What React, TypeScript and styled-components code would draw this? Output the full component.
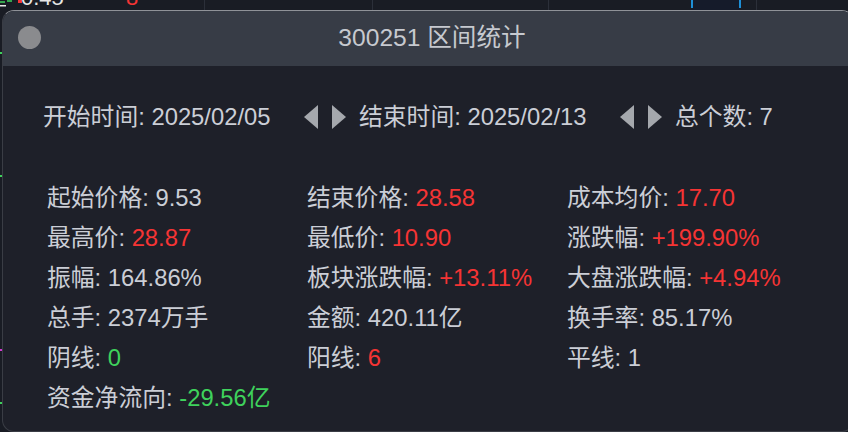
import React, { FC } from 'react';
import styled, { createGlobalStyle } from 'styled-components';

const GlobalStyle = createGlobalStyle`
  html, body {
    margin: 0;
    padding: 0;
    background: #191c24;
  }
  body {
    font-family: "Liberation Sans", "Noto Sans CJK SC", sans-serif;
  }
`;

const Desktop = styled.div`
  position: relative;
  width: 848px;
  height: 432px;
  overflow: hidden;
  background: #191c24;
`;

const Backdrop = styled.svg`
  display: block;
`;

const Window = styled.div`
  position: absolute;
  left: 2px;
  top: 10px;
  width: 852px;
  height: 422px;
  box-sizing: border-box;
  display: flex;
  flex-direction: column;
  border-radius: 12px;
  border: 1px solid #3a3d45;
  border-top-color: #8f9298;
  overflow: hidden;
  background: #1e2029;
  color: #cbced6;
  font-size: 23.8px;
`;

const TitleBar = styled.div`
  position: relative;
  height: 55px;
  flex-shrink: 0;
  display: flex;
  align-items: center;
  justify-content: center;
  background: #373c46;
  padding-left: 8px;
`;

const CloseDot = styled.span`
  position: absolute;
  left: 15px;
  top: 15px;
  width: 23px;
  height: 23px;
  border-radius: 50%;
  background: #8a8b8e;
`;

const Title = styled.h1`
  margin: 0;
  font-size: 24.6px;
  font-weight: normal;
  line-height: 1;
  color: #c6c9cf;
`;

const Body = styled.div`
  padding: 36px 0 0 40px;
`;

const RangeRow = styled.div`
  display: flex;
  align-items: center;
  height: 30px;
  line-height: 30px;
`;

const Field = styled.span<{ $width?: number }>`
  width: ${ p => (p.$width ? `${ p.$width }px` : 'auto') };
  white-space: nowrap;
`;

const Arrows = styled.span`
  display: flex;
  gap: 14px;
  width: 42px;
  margin-right: 13px;
`;

const Triangle = styled.span<{ $dir: 'left' | 'right' }>`
  width: 0;
  height: 0;
  border-top: 12px solid transparent;
  border-bottom: 12px solid transparent;
  ${ p => (p.$dir === 'left'
    ? 'border-right: 14px solid #a5a8ad;'
    : 'border-left: 14px solid #a5a8ad;') }
`;

const StatsGrid = styled.div`
  display: grid;
  grid-template-columns: repeat(3, 260px);
  grid-auto-rows: 40px;
  margin: 46px 0 0 4px;
`;

const Stat = styled.div`
  line-height: 40px;
  white-space: nowrap;
`;

type Tone = 'plain' | 'up' | 'down';

const Value = styled.span<{ $tone: Tone }>`
  color: ${ p => (p.$tone === 'up' ? '#f53434' : p.$tone === 'down' ? '#3fd25c' : '#cbced6') };
`;

interface StatItem {
  label: string;
  value: string;
  tone: Tone;
}

const stats: StatItem[] = [
  { label: '起始价格', value: '9.53', tone: 'plain' },
  { label: '结束价格', value: '28.58', tone: 'up' },
  { label: '成本均价', value: '17.70', tone: 'up' },
  { label: '最高价', value: '28.87', tone: 'up' },
  { label: '最低价', value: '10.90', tone: 'up' },
  { label: '涨跌幅', value: '+199.90%', tone: 'up' },
  { label: '振幅', value: '164.86%', tone: 'plain' },
  { label: '板块涨跌幅', value: '+13.11%', tone: 'up' },
  { label: '大盘涨跌幅', value: '+4.94%', tone: 'up' },
  { label: '总手', value: '2374万手', tone: 'plain' },
  { label: '金额', value: '420.11亿', tone: 'plain' },
  { label: '换手率', value: '85.17%', tone: 'plain' },
  { label: '阴线', value: '0', tone: 'down' },
  { label: '阳线', value: '6', tone: 'up' },
  { label: '平线', value: '1', tone: 'plain' },
  { label: '资金净流向', value: '-29.56亿', tone: 'down' },
];

// the chart peeking out behind the dialog
const ChartBehind: FC = () => (
  <Backdrop width={ 848 } height={ 432 } viewBox="0 0 848 432">
    <rect width="848" height="432" fill="#191c24" />
    <rect x="692" y="0" width="48" height="10" fill="#151b2a" />
    { [204, 372, 548, 756].map(x => (
      <rect key={ x } x={ x } y="0" width="1" height="10" fill="#2b2f39" />
    )) }
    <rect x="691" y="0" width="2" height="8" fill="#1e8fd6" />
    <rect x="739" y="0" width="2" height="8" fill="#1e8fd6" />
    <path d="M0 2 L5 2 M7 1 L12 1" stroke="#3fd25c" strokeWidth="1.5" />
    <rect x="0" y="5" width="6" height="1.5" fill="#e8e8e8" />
    <rect x="18" y="0" width="4" height="3" fill="#f53434" />
    <text x="21" y="5" fontSize="22" fill="#e6e6e6" fontFamily="Liberation Sans">0.45</text>
    <text x="126" y="5" fontSize="22" fill="#f53434" fontFamily="Liberation Sans">8</text>
    <rect x="0" y="52" width="3" height="2" fill="#3fd25c" />
    <rect x="0" y="175" width="3" height="2" fill="#3fd25c" />
    <rect x="0" y="349" width="3" height="2" fill="#d23ad2" />
    <rect x="0" y="402" width="3" height="2" fill="#3fd25c" />
  </Backdrop>
);

const App: FC = () => (
  <>
    <GlobalStyle />
    <Desktop>
      <ChartBehind />
      <Window>
        <TitleBar>
          <CloseDot />
          <Title>300251 区间统计</Title>
        </TitleBar>
        <Body>
          <RangeRow>
            <Field $width={ 261 }>开始时间: 2025/02/05</Field>
            <Arrows>
              <Triangle $dir="left" />
              <Triangle $dir="right" />
            </Arrows>
            <Field $width={ 261 }>结束时间: 2025/02/13</Field>
            <Arrows>
              <Triangle $dir="left" />
              <Triangle $dir="right" />
            </Arrows>
            <Field>总个数: 7</Field>
          </RangeRow>
          <StatsGrid>
            { stats.map(s => (
              <Stat key={ s.label }>
                { s.label }: <Value $tone={ s.tone }>{ s.value }</Value>
              </Stat>
            )) }
          </StatsGrid>
        </Body>
      </Window>
    </Desktop>
  </>
);

export default App;
